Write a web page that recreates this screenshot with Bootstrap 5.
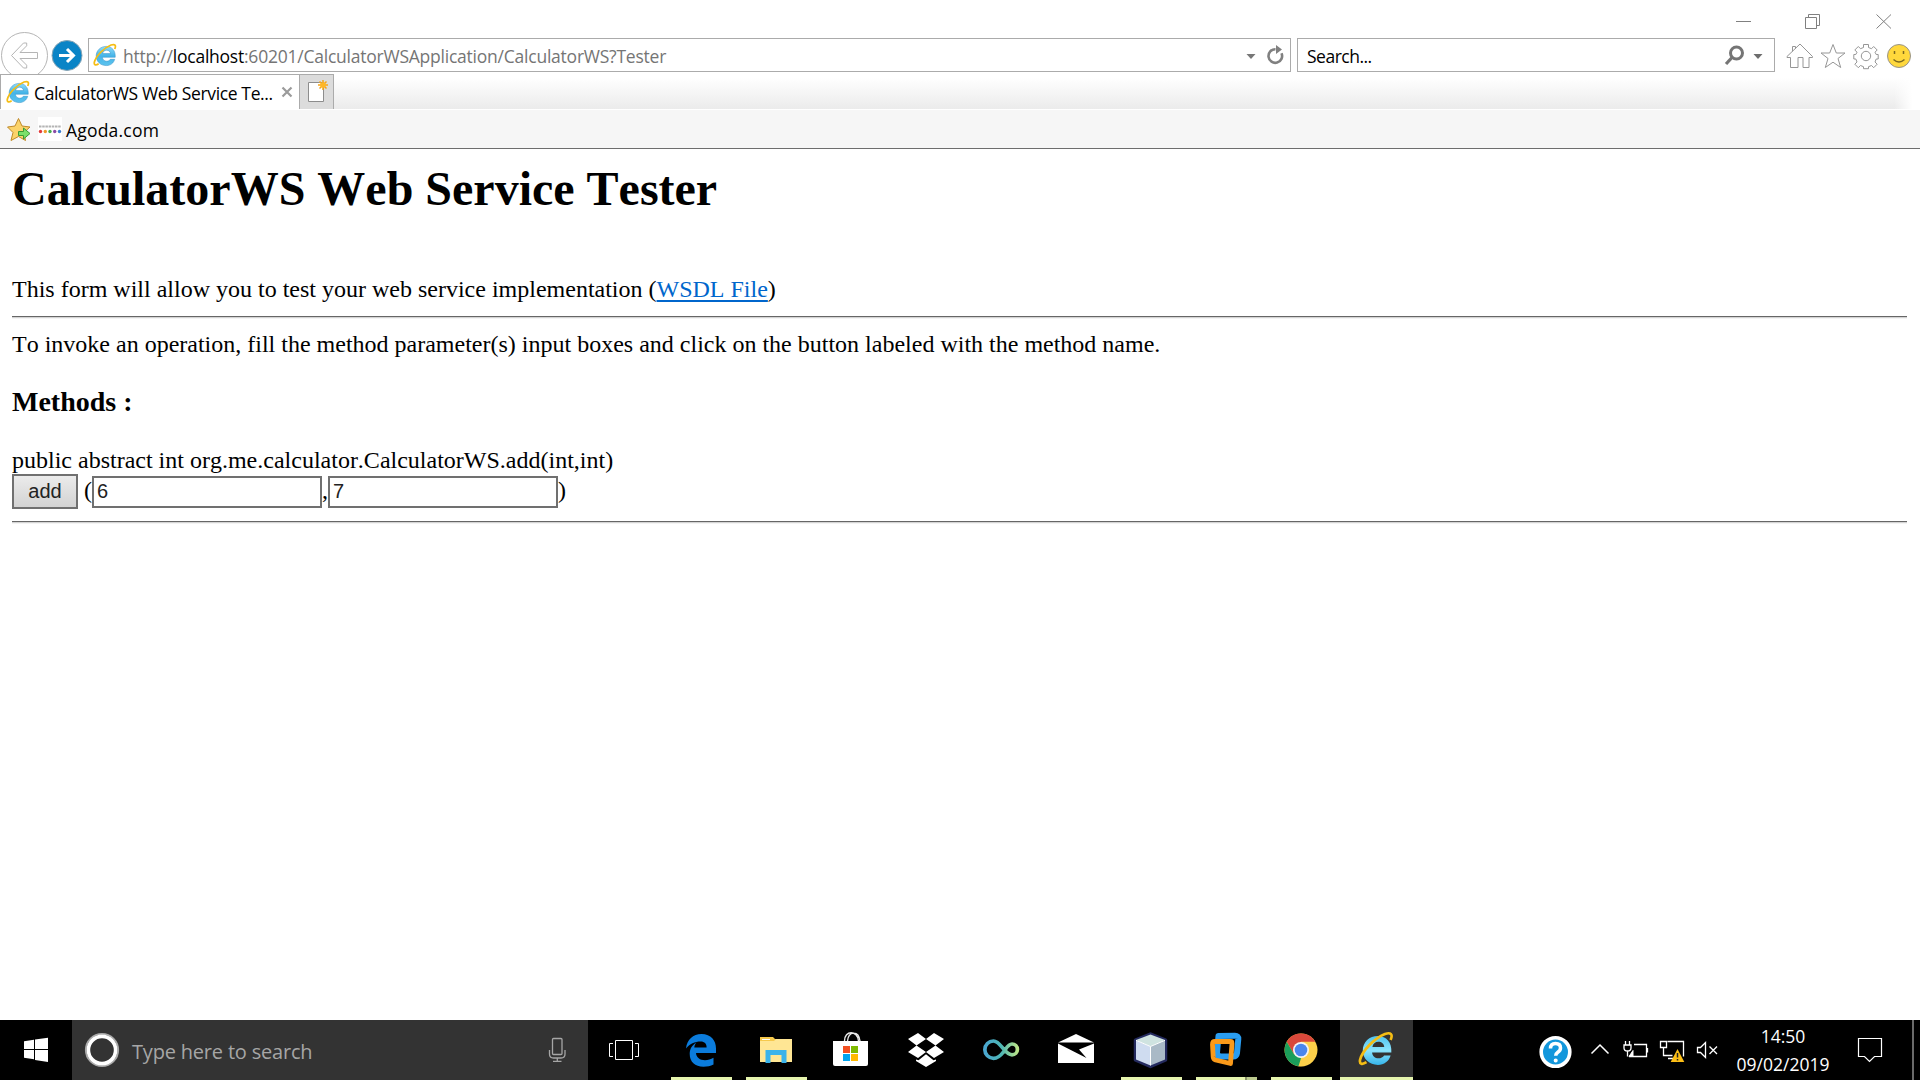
<!DOCTYPE html>
<html lang="en">
<head>
<meta charset="utf-8">
<title>CalculatorWS Web Service Tester</title>
<meta name="viewport" content="width=device-width, initial-scale=1">
<link href="https://cdn.jsdelivr.net/npm/bootstrap@5.3.0/dist/css/bootstrap.min.css" rel="stylesheet">
<style>
  body { font-family: "Open Sans", "Noto Sans", sans-serif; color: #000; background: #fff; }
  svg { display: block; flex: none; }
  .ui-text { font-size: 17.5px; line-height: 24px; white-space: nowrap; padding-top: 2px; }
  .caption-strip { height: 38px; }
  .address-row { height: 36px; }
  .nav-buttons { margin-top: -6px; }
  .field-box { height: 34px; border: 1px solid #ababab; }
  .address-field { width: 1203px; margin-left: 5px; }
  .search-field { width: 478px; margin-left: 6px; }
  .search-hint { padding-left: 9px; letter-spacing: -.5px; }
  .url { color: #757575; letter-spacing: -.23px; margin-left: 6px; }
  .url b { color: #000; font-weight: 400; }
  .tab-strip { height: 35px; background: linear-gradient(#fff 10%, #ebebeb 100%); position: relative; }
  .tab-strip::after { content: ""; position: absolute; right: 0; top: 0; width: 26px; height: 100%; background: linear-gradient(90deg, #fff0, #fff 70%); }
  .page-tab { width: 300px; border: 1px solid #ababab; border-bottom: 0; background: #fff; padding-left: 5px; }
  .tab-title { margin-left: 4px; letter-spacing: -.36px; }
  .new-tab { width: 34px; background: #dcdcdc; border: 1px solid #ababab; border-left: 0; border-bottom: 0; }
  .fav-bar { height: 40px; background: #f6f6f6; border-top: 1px solid #fff; border-bottom: 1px solid #6d6d6d; }
  .fav-label { letter-spacing: .2px; }
  .document { font: 24px/27px "Liberation Serif", serif; font-kerning: none; padding: 13px 13px 0 12px; }
  .document h1 { font: bold 48px/54px "Liberation Serif", serif; font-kerning: none; margin: 0 0 60px; white-space: nowrap; }
  .document h3 { font: bold 28px/32px "Liberation Serif", serif; margin: 28px 0 29px; }
  .document p { margin: 0; white-space: nowrap; }
  .document hr { margin: 13px 0 12px; border: 0; height: 3px; opacity: 1; background: linear-gradient(#666 0 1px, #d4d4d4 1px 2px, #f4f4f4 2px); }
  .document form + hr { margin-top: 12px; }
  .document a { color: #0066cc; text-decoration-thickness: 2px; text-underline-offset: 3px; text-decoration-skip-ink: none; }
  .invoke { width: 66px; height: 35px; border: 2px solid #707070; border-radius: 0; padding: 0 0 2px; color: #222; background: linear-gradient(#ebebeb, #d3d3d3); font: 20px/28px "Liberation Sans", sans-serif; }
  .param { width: 230px; height: 32px; border: 2px solid #707070; border-radius: 0; padding: 0 3px; color: #222; background: #fff; font: 20px/26px "Liberation Sans", sans-serif; }
  .punct { padding-bottom: 2px; }
  .open-paren { padding-left: 6px; }
  .taskbar { height: 60px; background: #000; color: #fff; }
  .task-search { width: 516px; background: #333; color: #a6a6a6; font-size: 20px; }
  .task-hint { letter-spacing: -.19px; padding-top: 3px; }
  .app { width: 61px; height: 60px; margin-right: 14px; border-bottom: 3px solid transparent; }
  .app.running { border-color: #e6f5ae; }
  .app.active { width: 73px; margin: 0 0 0 -6px; background: #333; }
  .app.many { border-image: linear-gradient(90deg, #e6f5ae 47px, #8a9569 47px 49px, #bcca8e 49px) 3; }
  .clock { width: 110px; font-size: 17.5px; line-height: 28px; padding: 2px 2px 0 0; }
  .peek { width: 8px; border-left: 2px solid #6a6a6a; }
</style>
</head>
<body class="vh-100 d-flex flex-column overflow-hidden">

<svg width="0" height="0" class="position-absolute">
  <defs>
    <linearGradient id="ieBlue" x1="0" y1="0" x2="0" y2="1"><stop offset="0" stop-color="#8edcfa"/><stop offset=".5" stop-color="#45b4e8"/><stop offset="1" stop-color="#5cc3ee"/></linearGradient>
    <linearGradient id="ieLight" x1="0" y1="0" x2="0" y2="1"><stop offset="0" stop-color="#4fc3ef"/><stop offset=".5" stop-color="#8be3fc"/><stop offset="1" stop-color="#36b5ea"/></linearGradient>
    <symbol id="ie" viewBox="0 0 34 34">
      <path d="M31.500 20.200H13.300c.3 3.400 2.800 5.600 6 5.600 2.400 0 4.300-1 5.300-2.700h6.200C29.200 28.500 24.800 32 18.800 32 10.800 32 4.500 26.300 4.500 18.500c0-8 6.200-13.700 14.300-13.700 8 0 13.300 6 12.700 15.400zM13.600 15h11.200c-.3-2.900-2.500-4.800-5.500-4.800-3.100 0-5.200 1.900-5.700 4.800z"/>
      <path d="M8 29.500C4 32 1 31.500 2 27 4 19 15 7 25.500 2.800 31 1 33.200 3 30.800 8.500" fill="none" stroke="#f5bd14" stroke-width="2.500"/>
    </symbol>
  </defs>
</svg>

<header>
  <div class="caption-strip d-flex justify-content-end">
    <svg width="192" height="38" viewBox="1728 0 192 38" fill="none" stroke="#808080" stroke-width="1">
      <path d="M1736 21.500h15M1805.500 17.500h11v11h-11zM1808.500 17v-2.500h11v11h-2.500M1876.500 14.500l14.500 14M1891 14.500l-14.500 14"/>
    </svg>
  </div>
  <div class="address-row d-flex align-items-start">
    <svg class="nav-buttons" width="83" height="42" viewBox="0 32 83 42">
      <circle cx="24.500" cy="55.500" r="23" fill="#fff" stroke="#b5b5b5"/>
      <path d="M11.500 55.500L23.500 43h3.200v2.800l-6.700 6.700h17.500v6H20l6.700 6.700V68h-3.200z" fill="none" stroke="#b5b5b5"/>
      <circle cx="67" cy="55.500" r="15" fill="#0a84c6" stroke="#8aa6b6"/>
      <path d="M59 55.500h14M67 49l6.500 6.500L67 62" fill="none" stroke="#fff" stroke-width="3"/>
    </svg>
    <div class="field-box address-field d-flex align-items-center">
      <svg width="24" height="24" class="ms-1" fill="url(#ieBlue)" stroke="#2d8cc4" stroke-width=".7"><use href="#ie"/></svg>
      <span class="ui-text url flex-grow-1">http://<b>localhost</b>:60201/CalculatorWSApplication/CalculatorWS?Tester</span>
      <svg width="46" height="32" viewBox="1244 39 46 32">
        <path d="M1246.500 54h9l-4.500 5z" fill="#777"/>
        <path d="M1275.500 49.200a6.800 6.800 0 1 0 6 4" fill="none" stroke="#808080" stroke-width="2.600"/>
        <path d="M1276 45l6 4.500-6 4.500z" fill="#808080"/>
      </svg>
    </div>
    <div class="field-box search-field d-flex align-items-center justify-content-between">
      <span class="ui-text search-hint">Search...</span>
      <svg width="50" height="32" viewBox="1724 39 50 32">
        <circle cx="1736.500" cy="53" r="6" fill="none" stroke="#757575" stroke-width="3"/>
        <path d="M1732 57.500l-6 6.500" stroke="#757575" stroke-width="3.200"/>
        <path d="M1753.500 54h9l-4.500 5z" fill="#6d6d6d"/>
      </svg>
    </div>
    <svg width="145" height="36" viewBox="1775 38 145 36" fill="none" stroke="#969696">
      <path d="M1790.500 67.500v-10h-3.500v-1l13-12.500 12.500 12.500v1h-3.500v10h-6v-10h-5v10zM1792.500 51.500v-5h3v2"/>
      <path d="M1833 44.500l3.300 8.500h8.700l-7 5.500 2.700 9-7.700-5.300-7.700 5.300 2.700-9-7-5.500h8.700z"/>
      <circle cx="1866" cy="56" r="4.700"/>
      <path d="M1863.500 44.500h5v3l3 1.200 2.200-2.200 3.500 3.500-2.200 2.200 1.200 2.300h2v4.500h-2l-1.200 3 2.200 2.200-3.500 3.500-2.200-2.200-3 1.200v2h-5v-2l-3-1.200-2.200 2.200-3.500-3.500 2.200-2.200-1.200-3h-2v-4.500h2l1.200-2.300-2.200-2.200 3.500-3.500 2.200 2.200 3-1.200z"/>
      <circle cx="1899" cy="56" r="11.500" fill="#ffd83c" stroke="#98948a"/>
      <path d="M1894.500 51v3M1903.500 51v3M1893.500 59.500q5.500 5 11 0" stroke="#7d6a20" stroke-width="1.500"/>
    </svg>
  </div>
  <div class="tab-strip d-flex">
    <div class="page-tab d-flex align-items-center">
      <svg width="24" height="24" fill="url(#ieBlue)" stroke="#2d8cc4" stroke-width=".7"><use href="#ie"/></svg>
      <span class="ui-text tab-title flex-grow-1">CalculatorWS Web Service Te...</span>
      <svg width="18" height="18" viewBox="0 0 18 18"><path d="M1.500 4.500l9 9M10.500 4.500l-9 9" stroke="#9b9b9b" stroke-width="2.200"/></svg>
    </div>
    <div class="new-tab">
      <svg width="33" height="34" viewBox="300 75 33 34">
        <path d="M308.500 82.500h15v19h-15z" fill="#fff" stroke="#8d8d8d"/>
        <path d="M323 80v10M318 85h10M319.500 81.500l7 7M326.500 81.500l-7 7" stroke="#f6a517" stroke-width="1.500"/><circle cx="323" cy="85" r="2.800" fill="#ffb726"/>
      </svg>
    </div>
  </div>
  <div class="fav-bar d-flex align-items-center">
    <svg width="66" height="38" viewBox="0 110 66 38">
      <path d="M18.500 118.500l3.500 7.500 8 1-6 5.500 1.500 8-7-4-7.500 4 2-8-5.500-5.500 7.500-1z" fill="#fbd36a" stroke="#c08a2a" stroke-linejoin="round"/>
      <path d="M18.500 131.500h5v-3.500l6.500 5.500-6.500 5.500v-3.500h-5z" fill="#7be06a" stroke="#3c9a35"/>
      <path d="M38 117h24v24H38z" fill="#fff"/>
      <path d="M39 126.500h22" stroke="#b4b4b4" stroke-width="2" stroke-dasharray="2.500 .7"/>
      <circle cx="40.500" cy="131.500" r="1.700" fill="#e23b3b"/><circle cx="45.300" cy="131.500" r="1.700" fill="#f09a2a"/><circle cx="50" cy="131.500" r="1.700" fill="#46ad4e"/><circle cx="54.700" cy="131.500" r="1.700" fill="#8a4aa6"/><circle cx="59.500" cy="131.500" r="1.700" fill="#3a7cd0"/>
    </svg>
    <span class="ui-text fav-label">Agoda.com</span>
  </div>
</header>

<main class="document flex-grow-1">
  <h1>CalculatorWS Web Service Tester</h1>
  <p>This form will allow you to test your web service implementation (<a href="#">WSDL File</a>)</p>
  <hr>
  <p>To invoke an operation, fill the method parameter(s) input boxes and click on the button labeled with the method name.</p>
  <h3>Methods :</h3>
  <p>public abstract int org.me.calculator.CalculatorWS.add(int,int)</p>
  <form class="d-flex align-items-center">
    <button type="button" class="invoke">add</button>
    <span class="punct open-paren">(</span><input class="param" value="6" aria-label="First parameter"><span class="punct">,</span><input class="param" value="7" aria-label="Second parameter"><span class="punct">)</span>
  </form>
  <hr>
</main>

<footer class="taskbar d-flex">
  <svg width="72" height="60" viewBox="0 1020 72 60" fill="#fff"><path d="M24 1041.200l10-1.400v9.200H24zM35 1039.600l13-1.800v11.200H35zM24 1050h10v9.200l-10-1.400zM35 1050h13v12l-13-1.900z"/></svg>
  <div class="task-search d-flex align-items-center">
    <svg width="60" height="60" viewBox="72 1020 60 60" fill="none"><circle cx="102" cy="1050" r="16.200" stroke="#aaa" stroke-width="1.800"/><circle cx="102" cy="1050" r="13.600" stroke="#fff" stroke-width="3.600"/></svg>
    <span class="task-hint flex-grow-1 text-nowrap">Type here to search</span>
    <svg width="48" height="60" viewBox="540 1020 48 60" fill="none" stroke="#a6a6a6" stroke-width="1.300"><rect x="552.500" y="1038.500" width="9.500" height="16" rx="1"/><path d="M549.500 1050v4q0 4 4 4h7.500q4 0 4-4v-4M557.300 1058v3M553 1061.400h8.500"/></svg>
  </div>
  <svg width="83" height="60" viewBox="588 1020 83 60" fill="none" stroke="#fff"><path d="M615.500 1040.500h17v19h-17zM613 1043.500h-3.500v13h3.500M635 1043.500h3.500v13H635"/></svg>
  <div class="app running"><svg width="61" height="57" viewBox="671 1020 61 57"><path d="M686 1048.500c1-9 7-14.500 15.500-14.500 9.500 0 14.500 6.500 14.500 14.500v4.500h-20c.3 4.700 4 7.200 9 7.200 3 0 5.800-.8 8.500-2.400v6.700c-3 1.500-6.300 2.200-10 2.200-8.500 0-13.800-5-13.800-12.700 0-5 2.300-9 6.800-11.500-1.300 1.400-2 3-2.200 5h12.300c0-3.800-2-6-6-6-5.600 0-11.200 2.500-14.600 7z" fill="#0b7cdc"/></svg></div>
  <div class="app running"><svg width="61" height="57" viewBox="746 1020 61 57"><path d="M760 1037h13l2 2h17v23h-32z" fill="#f6c94c"/><path d="M760 1041h14l2-2h16v23h-32z" fill="#ffe694"/><path d="M762 1039.500h8" stroke="#fff"/><path d="M765.500 1063v-13h21v13h-5v-8h-11v8z" fill="#3bb3ea"/></svg></div>
  <div class="app"><svg width="61" height="57" viewBox="821 1020 61 57"><path d="M844.500 1041c0-11 13-11 14 0M847.500 1041c1-10 11-11 12.500 0" fill="none" stroke="#e8e8e8" stroke-width="1.400"/><path d="M833 1041h35v23q0 2-2 2h-31q-2 0-2-2z" fill="#fff"/><path d="M843 1046h7v7h-7z" fill="#f25022"/><path d="M851 1046h7v7h-7z" fill="#7fba00"/><path d="M843 1054h7v7h-7z" fill="#00a4ef"/><path d="M851 1054h7v7h-7z" fill="#ffb900"/></svg></div>
  <div class="app"><svg width="61" height="57" viewBox="896 1020 61 57" fill="#fff"><path d="M908 1039l10-6 8 6-9.500 6.500zM944 1039l-10-6-8 6 9.500 6.500zM908 1052l8.500-6.500 9.500 6.500-8 6zM944 1052l-8.500-6.500-9.500 6.500 8 6zM916 1059.500l2.500.8 7.500-6 7.500 6 2.500-.8v1.500l-10 6-10-6z"/></svg></div>
  <div class="app"><svg width="61" height="57" viewBox="971 1020 61 57"><defs><linearGradient id="loop" x1="0" x2="1"><stop stop-color="#4aa7d0"/><stop offset=".5" stop-color="#4db6b4"/><stop offset="1" stop-color="#b8e388"/></linearGradient></defs><path d="M1003 1052.500c-3 4-5.500 5.800-9.500 5.800a8.600 8.600 0 0 1 0-17.300c7.500 0 10.500 13.800 18.500 13.800a5.400 5.400 0 0 0 0-10.800c-4 0-6 5-9 8.500z" fill="none" stroke="url(#loop)" stroke-width="3.700"/></svg></div>
  <div class="app"><svg width="61" height="57" viewBox="1046 1020 61 57" fill="#fff"><path d="M1058 1042.500l18-8.500 18 8.500zM1058 1043.500l28.500 14.500-7.500-8.500 15-6v19.500h-36z"/></svg></div>
  <div class="app running"><svg width="61" height="57" viewBox="1121 1020 61 57"><path d="M1150.500 1034l15 6v20l-15 6.500-15-6.500v-20z" fill="#9fb3c8" stroke="#242a5e" stroke-width="3.500" stroke-linejoin="round"/><path d="M1150.500 1034.500l14.500 5.500-14.500 6.500-14.500-6.500z" fill="#cfe3e0"/><path d="M1136 1040.500l14.500 6v19l-14.500-6z" fill="#cfdcf0"/><path d="M1165 1040.500l-14.500 6v19l14.500-6z" fill="#a9b9c6"/><path d="M1136 1040.300l14.500 6.200 14.500-6.200M1150.500 1046.500v19" fill="none" stroke="#fff"/></svg></div>
  <div class="app running many"><svg width="61" height="57" viewBox="1196 1020 61 57" fill="none" stroke-linejoin="round"><path d="M1218.500 1036l16.500-.3q3.500 0 3.300 3.300l-1.300 14q-.5 3.500-4 3.500h-12q-4 0-4-4z" stroke="#2a9df0" stroke-width="6"/><path d="M1215 1041.500h15.500q1.500 0 1.500 2l-1.500 20-15-3.500q-2-.6-2.300-3l-.7-12.500q0-3 2.500-3z" stroke="#fa9a1a" stroke-width="4.800"/></svg></div>
  <div class="app running"><svg width="61" height="57" viewBox="1271 1020 61 57"><circle cx="1301" cy="1050" r="16.500" fill="#fdd04a"/><path d="M1286.700 1041.800a16.500 16.500 0 0 1 28.600 0H1301l-7 12.500z" fill="#d9483b"/><path d="M1286.700 1041.800l7.200 12.300 7.100 4.200-2.500 8a16.500 16.500 0 0 1-11.800-24.500z" fill="#1b9e5a"/><path d="M1298.500 1066.300l8.500-12.500 3 3-5.500 9.300z" fill="#fdd04a"/><circle cx="1301" cy="1050" r="8" fill="#f4f4f4"/><circle cx="1301" cy="1050" r="6.300" fill="#4a86ee"/></svg></div>
  <div class="app running active"><svg width="73" height="57" viewBox="1340 1020 73 57"><g fill="url(#ieLight)"><use href="#ie" x="1358" y="1031" width="36" height="36"/></g></svg></div>
  <svg class="ms-auto" width="214" height="60" viewBox="1515 1020 214 60" fill="none" stroke="#fff">
    <circle cx="1555.500" cy="1052" r="14.300" fill="#1397dc" stroke-width="3.600"/>
    <path d="M1550.500 1048.500q0-5 5-5t5 4.500q0 2.500-2.700 4.200-2.100 1.400-2.100 3.600" stroke-width="3.500"/><circle cx="1555.700" cy="1060.500" r="1.300" stroke-width="1.500" fill="#fff"/>
    <path d="M1591.500 1053.500l8.500-8.500 8.500 8.500" stroke-width="1.500"/>
    <path d="M1634 1044.500h12.500v12H1629M1647.500 1048v4.500M1625.500 1041v4M1629.500 1041v4M1624 1045h7v3q0 3-3.500 3t-3.500-3zM1627.500 1051v5.500" stroke-width="1.300"/><path d="M1629 1056.500l4-6v6z" fill="#fff"/>
    <path d="M1667.500 1041.500h16v15M1660.500 1041.500h6v6h-6zM1663.500 1047.500v8h9M1668 1058.500h5" stroke-width="1.300"/><path d="M1677.500 1049l6.800 13h-13.600z" fill="#fdbf16" stroke="none"/><path d="M1677.500 1053v4.500M1677.500 1059v1.500" stroke="#222" stroke-width="1.500"/>
    <path d="M1697.500 1047.500h3l5-5v15l-5-5h-3zM1709.500 1046.500l7.500 7.500M1717 1046.500l-7.500 7.500" stroke-width="1.300"/>
  </svg>
  <div class="clock text-center"><div>14:50</div><div>09/02/2019</div></div>
  <svg width="73" height="60" viewBox="1839 1020 73 60" fill="none" stroke="#fff"><path d="M1858.500 1038.500h23v18h-7l-5 5-5-5h-6z" stroke-width="1.200"/></svg>
  <div class="peek"></div>
</footer>

<script src="https://cdn.jsdelivr.net/npm/bootstrap@5.3.0/dist/js/bootstrap.bundle.min.js"></script>
</body>
</html>
